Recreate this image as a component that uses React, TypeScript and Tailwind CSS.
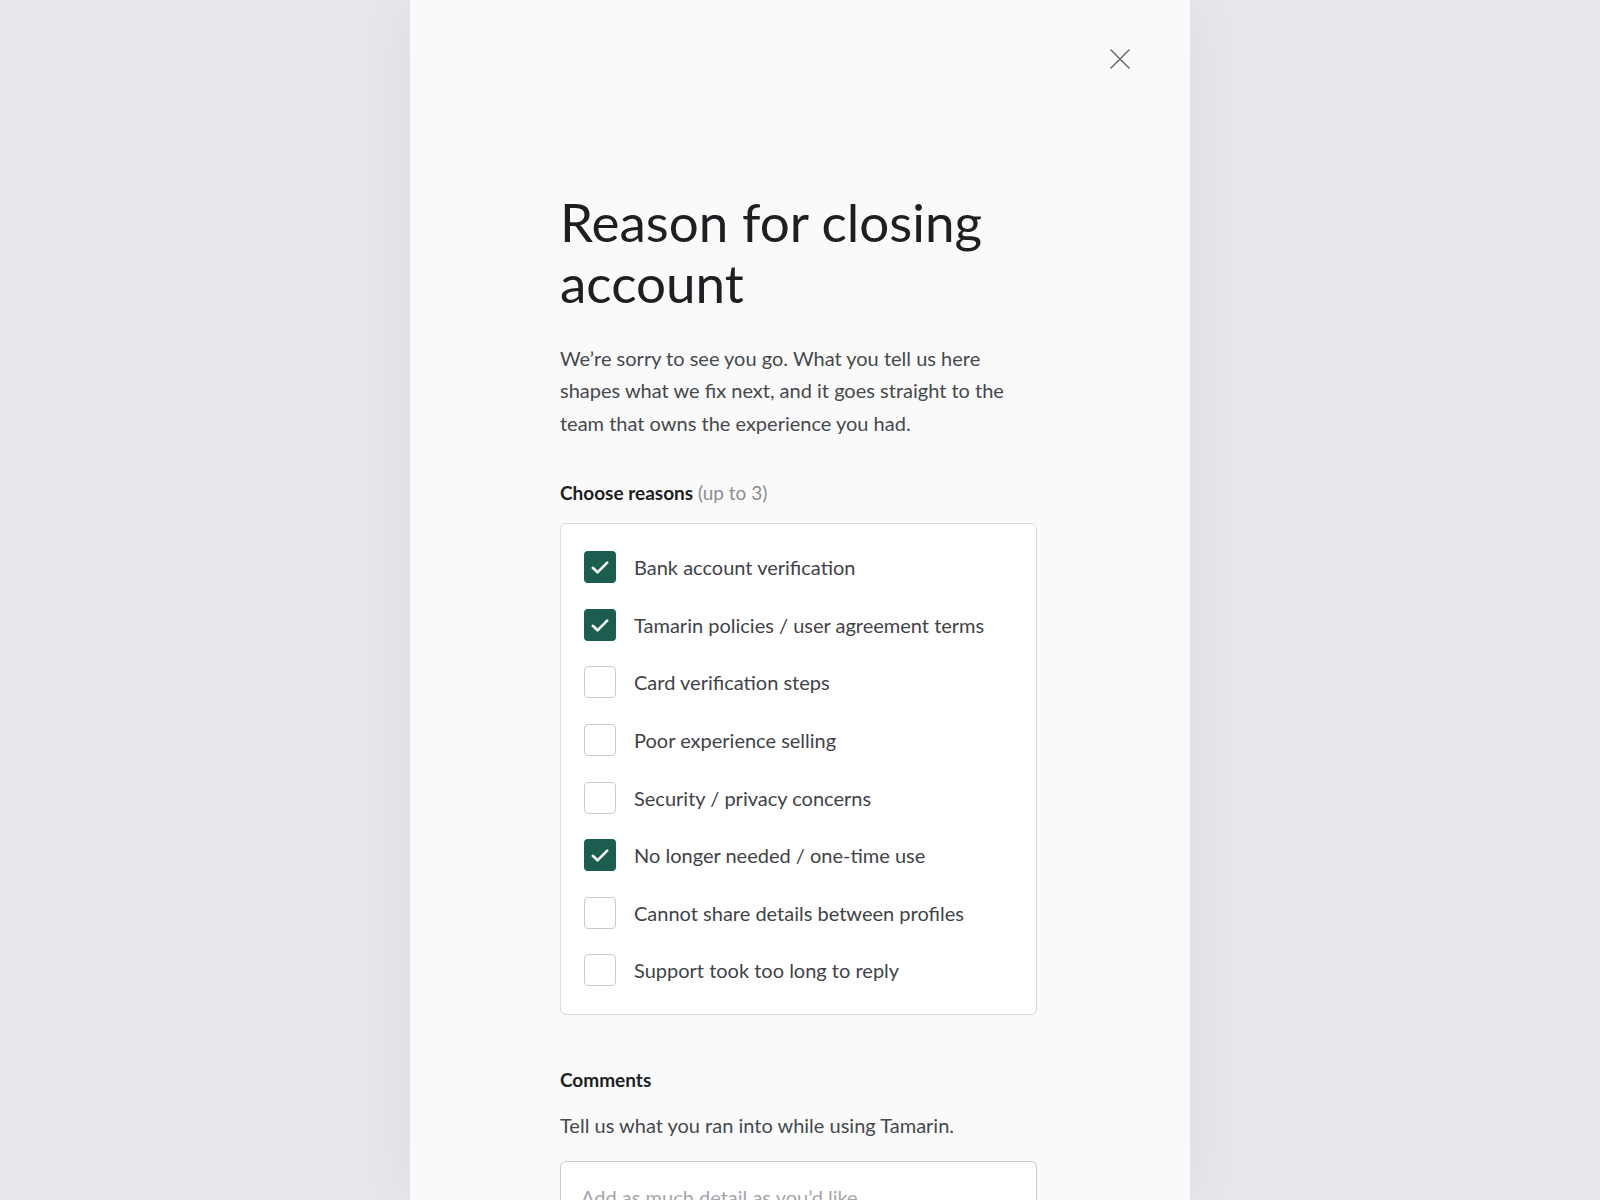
import React, { useState } from "react";

const reasons = [
  { label: "Bank account verification", checked: true },
  { label: "Tamarin policies / user agreement terms", checked: true },
  { label: "Card verification steps", checked: false },
  { label: "Poor experience selling", checked: false },
  { label: "Security / privacy concerns", checked: false },
  { label: "No longer needed / one-time use", checked: true },
  { label: "Cannot share details between profiles", checked: false },
  { label: "Support took too long to reply", checked: false },
];

function Check() {
  return (
    <svg width="32" height="32" viewBox="0 0 32 32" fill="none" stroke="white" strokeWidth="2.6" strokeLinecap="round" strokeLinejoin="round">
      <path d="M8.8 16.8L13.5 21.3L23.2 11.6" />
    </svg>
  );
}

export default function App() {
  const [state, setState] = useState(reasons.map((r) => r.checked));
  return (
    <div className="h-[1200px] overflow-hidden bg-[#e6e8eb] flex justify-center" style={{ fontFamily: 'Lato, "Noto Sans", sans-serif' }}>
      <div className="relative w-[780px] h-full bg-[#fafafa] shadow-[0_0_60px_rgba(0,0,0,0.06)]">
        <button className="absolute top-[49px] right-[60px] w-5 h-5 text-[#6b7075]" aria-label="Close">
          <svg width="20" height="20" viewBox="0 0 20 20" fill="none" stroke="currentColor" strokeWidth="1.6" strokeLinecap="round">
            <path d="M1 1L19 19M19 1L1 19" />
          </svg>
        </button>
        <div className="ml-[150px] w-[477px] pt-[191px]">
          <h1 className="text-[53px] leading-[61px] font-normal text-[#1d1f22]">Reason for closing account</h1>
          <p className="mt-[29px] text-[20px] leading-[32.4px] text-[#45494e]">
            We’re sorry to see you go. What you tell us here shapes what we fix next, and it goes straight to the team that owns the experience you had.
          </p>
          <div className="mt-[41px] text-[19px] leading-[26px]">
            <span className="font-bold text-[#1d1f22]">Choose reasons</span>{" "}
            <span className="text-[#8a8e93]">(up to 3)</span>
          </div>
          <div className="mt-[17px] rounded-[6px] border border-[#d9dcdf] bg-white px-[23px] pt-[27px] pb-[28px] flex flex-col gap-[25.6px]">
            {reasons.map((r, i) => (
              <label key={r.label} className="flex items-center gap-[18px] cursor-pointer">
                <span
                  onClick={() => setState((s) => s.map((v, j) => (j === i ? !v : v)))}
                  className={
                    state[i]
                      ? "w-8 h-8 rounded-[4px] bg-[#1b5e50] flex items-center justify-center shrink-0"
                      : "w-8 h-8 rounded-[4px] border border-[#c8cbcf] bg-white shrink-0"
                  }
                >
                  {state[i] ? <Check /> : null}
                </span>
                <span className="text-[20px] leading-[28px] text-[#3f4348]">{r.label}</span>
              </label>
            ))}
          </div>
          <div className="mt-[52px] text-[19px] leading-[26px] font-bold text-[#1d1f22]">Comments</div>
          <p className="mt-[18px] text-[20px] leading-[28px] text-[#45494e]">Tell us what you ran into while using Tamarin.</p>
          <div className="mt-[22px] rounded-[6px] border border-[#c8cbcf] bg-white h-[160px] px-5 pt-[20px]">
            <span className="text-[20px] text-[#a3a7ab]">Add as much detail as you’d like</span>
          </div>
        </div>
      </div>
    </div>
  );
}
